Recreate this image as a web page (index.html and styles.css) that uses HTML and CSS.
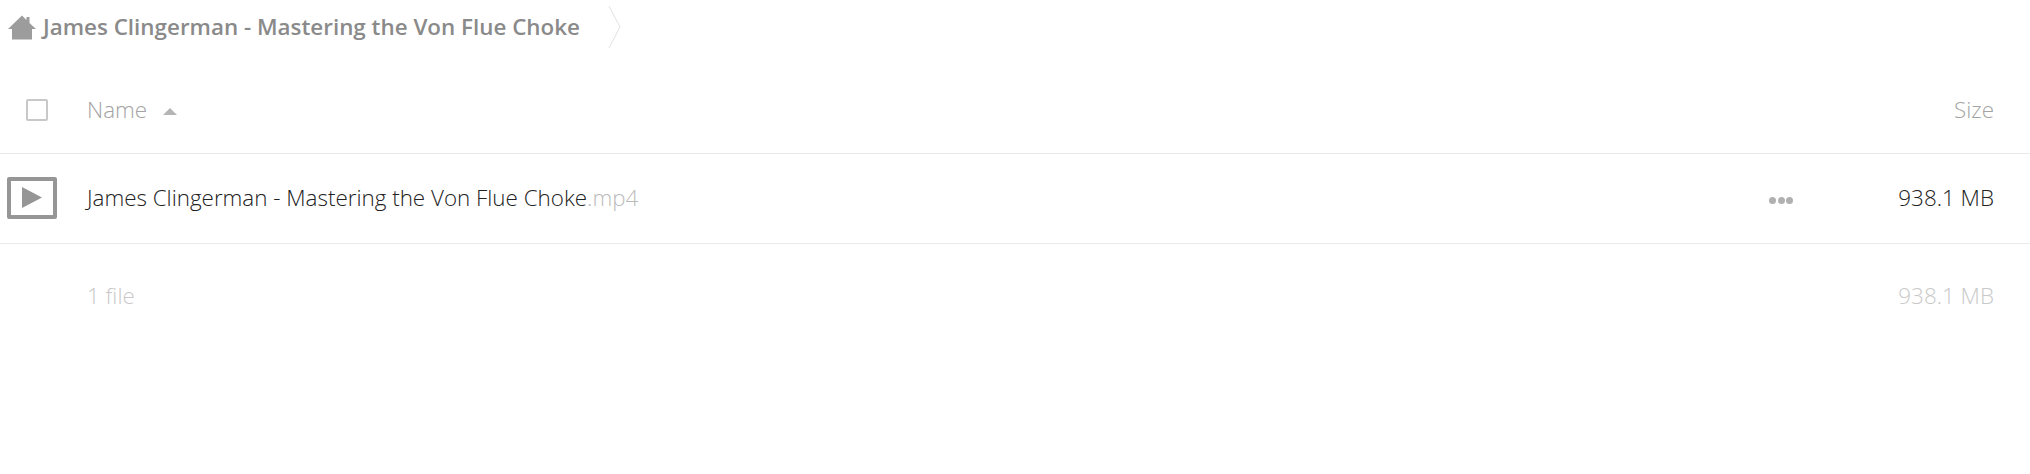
FILE: index.html
```html
<!DOCTYPE html>
<html lang="en">
<head>
<meta charset="utf-8">
<title>James Clingerman - Mastering the Von Flue Choke</title>
<link rel="stylesheet" href="styles.css">
</head>
<body>
<nav class="crumbs">
  <svg class="home" width="28" height="28" viewBox="0 0 28 28"><path d="M14 2.5 L18.5 7 V4 H21.5 V10 L28 16 H24 V26.5 H4 V16 H0 Z" fill="#9c9c9c"/></svg>
  <span class="crumb-title">James Clingerman - Mastering the Von Flue Choke</span>
  <svg class="chevron" width="13" height="42" viewBox="0 0 13 42"><path d="M1 0 L12 21 L1 42" fill="none" stroke="#e2e2e2" stroke-width="1"/></svg>
</nav>
<header class="row head">
  <div class="cell-check"><span class="checkbox"></span></div>
  <div class="cell-name">Name<span class="sort"></span></div>
  <div class="cell-size">Size</div>
</header>
<section class="row file">
  <div class="cell-check">
    <span class="video"><svg width="20" height="21" viewBox="0 0 20 21"><path d="M0 0 L20 10.5 L0 21 Z" fill="#969696"/></svg></span>
  </div>
  <div class="cell-name"><span class="base">James Clingerman - Mastering the Von Flue Choke</span><span class="ext">.mp4</span></div>
  <div class="dots"><i></i><i></i><i></i></div>
  <div class="cell-size strong">938.1 MB</div>
</section>
<footer class="row foot">
  <div class="cell-check"></div>
  <div class="cell-name">1 file</div>
  <div class="cell-size">938.1 MB</div>
</footer>
</body>
</html>
```
FILE: styles.css
```css
* { box-sizing: border-box; }
html, body { margin: 0; background: #fff; }
body { font-family: "Open Sans", sans-serif; font-size: 22.4px; font-weight: 300; color: #222; height: 474px; overflow: hidden; }
.crumbs { display: flex; align-items: center; height: 52px; padding-left: 8px; }
.home { flex: none; margin-top: 1px; }
.crumb-title { font-weight: 600; color: #8a8a8a; margin-left: 7px; white-space: nowrap; }
.chevron { flex: none; margin-left: 28px; margin-top: 2px; }
.row { display: flex; align-items: center; padding-right: 36px; }
.head { height: 102px; padding-top: 13px; color: #a3a3a3; border-bottom: 1px solid #eaeaea; }
.cell-check { flex: none; width: 87px; display: flex; justify-content: flex-start; padding-left: 7px; }
.cell-name { flex: 1; white-space: nowrap; display: flex; align-items: center; }
.cell-size { flex: none; text-align: right; white-space: nowrap; }
.checkbox { width: 22px; height: 22px; margin-left: 19px; margin-top: 2px; border: 2px solid #c8c8c8; border-radius: 2px; display: block; }
.sort { width: 0; height: 0; margin-left: 16px; margin-top: 4px; border-left: 7px solid transparent; border-right: 7px solid transparent; border-bottom: 7px solid #b5b5b5; }
.file { height: 90px; padding-bottom: 2px; border-bottom: 1px solid #eaeaea; }
.video { display: flex; align-items: center; justify-content: center; width: 50px; height: 42px; border: 4px solid #969696; border-radius: 2px; }
.base { color: #222; }
.ext { color: #bbb; }
.dots { display: flex; gap: 1.5px; margin-right: 105px; margin-top: 6px; }
.dots i { display: block; width: 7px; height: 7px; border-radius: 50%; background: #b0b0b0; }
.strong { color: #222; }
.foot { height: 102px; color: #c9c9c9; }
```
